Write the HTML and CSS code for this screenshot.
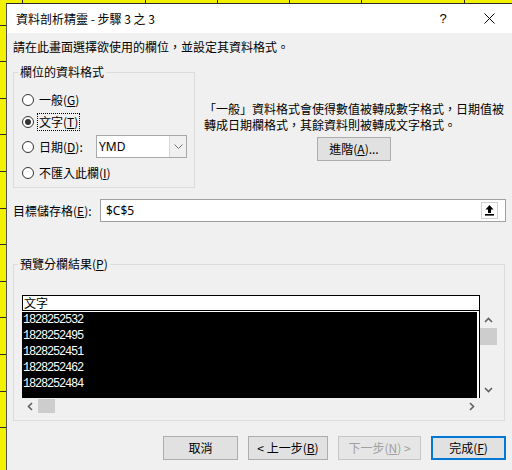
FILE: index.html
```html
<!DOCTYPE html>
<html lang="zh-Hant">
<head>
<meta charset="utf-8">
<title>資料剖析精靈</title>
<link rel="stylesheet" href="styles.css">
</head>
<body>
<div class="screen">
  <div class="top-strip">
    <span class="c1"></span><span class="c2"></span><span class="c3"></span><span class="c4"></span><span class="c5"></span><span class="c6"></span>
  </div>
  <div class="left-strip"></div>
  <div class="dialog">
    <div class="titlebar">
      <div class="title">資料剖析精靈 - 步驟 3 之 3</div>
      <div class="tb-btn help">?</div>
      <div class="tb-btn close">
        <svg width="11" height="11" viewBox="0 0 11 11"><path d="M0.5 0.5 L10.5 10.5 M10.5 0.5 L0.5 10.5" stroke="#000" stroke-width="1" fill="none"/></svg>
      </div>
    </div>
    <div class="content">
      <div class="instr">請在此畫面選擇欲使用的欄位，並設定其資料格式。</div>
      <div class="upper">
        <fieldset class="group fmt">
          <legend>欄位的資料格式</legend>
          <div class="radios">
            <div class="radio-row"><span class="radio"></span><span class="rlabel">一般(<u>G</u>)</span></div>
            <div class="radio-row"><span class="radio checked"><span class="dot"></span></span><span class="rlabel focus">文字(<u>T</u>)</span></div>
            <div class="radio-row"><span class="radio"></span><span class="rlabel">日期(<u>D</u>):</span>
              <div class="combo"><span class="combo-text">YMD</span><span class="combo-btn"><svg width="9" height="5" viewBox="0 0 9 5"><path d="M0.5 0.5 L4.5 4.5 L8.5 0.5" stroke="#707070" stroke-width="1" fill="none"/></svg></span></div>
            </div>
            <div class="radio-row"><span class="radio"></span><span class="rlabel">不匯入此欄(<u>I</u>)</span></div>
          </div>
        </fieldset>
        <div class="desc">
          <div class="desc-line">「一般」資料格式會使得數值被轉成數字格式，日期值被</div>
          <div class="desc-line">轉成日期欄格式，其餘資料則被轉成文字格式。</div>
          <button class="btn btn-adv">進階(<u>A</u>)...</button>
        </div>
      </div>
      <div class="target">
        <span class="tlabel">目標儲存格(<u>E</u>):</span>
        <div class="tinput">
          <span class="tval">$C$5</span>
          <span class="pick"><svg width="15" height="15" viewBox="0 0 15 15"><path d="M7.5 2 L3.5 6.5 L6 6.5 L6 10 L9 10 L9 6.5 L11.5 6.5 Z" fill="#000"/><rect x="3" y="11" width="9" height="1.6" fill="#000"/></svg></span>
        </div>
      </div>
      <fieldset class="group prev">
        <legend>預覽分欄結果(<u>P</u>)</legend>
        <div class="preview">
          <div class="phead">文字</div>
          <div class="pspace"></div>
          <div class="pbody">
            <div class="pdata">
              <div>1828252532</div>
              <div>1828252495</div>
              <div>1828252451</div>
              <div>1828252462</div>
              <div>1828252484</div>
            </div>
          </div>
          <div class="vscroll">
            <span class="arr"><svg width="9" height="6" viewBox="0 0 9 6"><path d="M1 5 L4.5 1.5 L8 5" stroke="#606060" stroke-width="1.6" fill="none"/></svg></span>
            <span class="vthumb"></span>
            <span class="vfill"></span>
            <span class="arr"><svg width="9" height="6" viewBox="0 0 9 6"><path d="M1 1 L4.5 4.5 L8 1" stroke="#606060" stroke-width="1.6" fill="none"/></svg></span>
          </div>
          <div class="hscroll">
            <span class="harr"><svg width="6" height="9" viewBox="0 0 6 9"><path d="M5 1 L1.5 4.5 L5 8" stroke="#606060" stroke-width="1.6" fill="none"/></svg></span>
            <span class="hthumb"></span>
            <span class="hfill"></span>
            <span class="harr"><svg width="6" height="9" viewBox="0 0 6 9"><path d="M1 1 L4.5 4.5 L1 8" stroke="#606060" stroke-width="1.6" fill="none"/></svg></span>
          </div>
          <div class="pspace"></div>
        </div>
      </fieldset>
      <div class="buttons">
        <button class="btn b-cancel">取消</button>
        <button class="btn b-back">&lt; 上一步(<u>B</u>)</button>
        <button class="btn b-next" disabled>下一步(<u>N</u>) &gt;</button>
        <button class="btn b-finish">完成(<u>F</u>)</button>
      </div>
    </div>
  </div>
</div>
</body>
</html>
```
FILE: styles.css
```css
* { box-sizing: border-box; }
html, body { margin: 0; padding: 0; }
body {
  width: 512px;
  height: 470px;
  overflow: hidden;
  background: #f1f100;
  font-family: "Noto Sans CJK TC", "Noto Sans CJK SC", sans-serif;
  font-size: 12px;
  color: #000;
}
u { text-decoration: underline; text-underline-offset: 1px; }

.screen {
  display: grid;
  grid-template-columns: 6px 506px;
  grid-template-rows: 3px 467px;
}
.top-strip { grid-column: 1 / 3; display: flex; height: 3px; }
.top-strip span { flex: none; height: 3px; border-right: 1px solid #2a2a2a; }
.top-strip .c1 { width: 23px; }
.top-strip .c2 { width: 123px; }
.top-strip .c3 { width: 72px; }
.top-strip .c4 { width: 72px; }
.top-strip .c5 { width: 72px; }
.top-strip .c6 { width: 103px; }
.left-strip {
  background-image: repeating-linear-gradient(to bottom, transparent 0, transparent 35.6px, #2a2a2a 35.6px, #2a2a2a 36.6px);
  background-position: 0 -14px;
}

.dialog {
  border-left: 1px solid #555;
  border-top: 1px solid #2a2a2a;
  background: #f0f0f0;
  display: flex;
  flex-direction: column;
}
.titlebar {
  height: 29px;
  background: #fff;
  display: flex;
  align-items: center;
  flex: none;
}
.title { flex: 1; padding-left: 9px; line-height: 16px; }
.tb-btn {
  width: 46px;
  height: 29px;
  display: flex;
  align-items: center;
  justify-content: center;
}
.help { font-family: "Liberation Sans", sans-serif; font-size: 13px; }

.content { padding: 6px 6px 0 6px; }
.instr { line-height: 16px; }

.upper { display: flex; align-items: flex-start; margin-top: 10px; }
.group {
  margin: 0;
  padding: 0;
  border: 1px solid #dcdcdc;
  min-width: 0;
}
.group legend {
  margin-left: 4px;
  padding: 0 2px;
  line-height: 14px;
}
.fmt { width: 182px; flex: none; }
.radios {
  display: grid;
  grid-template-rows: 23px 22px 27px 26px;
  padding: 9px 0 1px 8px;
}
.radio-row { display: flex; align-items: center; }
.radio {
  width: 12px;
  height: 12px;
  flex: none;
  border: 1px solid #333;
  border-radius: 50%;
  background: #fff;
  margin-right: 3px;
  display: flex;
  align-items: center;
  justify-content: center;
}
.dot { width: 6px; height: 6px; border-radius: 50%; background: #333; }
.rlabel { border: 1px dotted transparent; padding: 0 1px; line-height: 16px; }
.rlabel.focus { border-color: #000; }
.combo {
  margin-left: auto;
  margin-right: 7px;
  width: 91px;
  height: 23px;
  border: 1px solid #a8a8a8;
  background: #fff;
  display: flex;
}
.combo-text {
  flex: 1;
  padding-left: 2px;
  line-height: 21px;
  font-family: "Noto Sans", sans-serif;
  font-size: 12px;
}
.combo-btn {
  width: 17px;
  background: #f0f0f0;
  border-left: 1px solid #d6d6d6;
  display: flex;
  align-items: center;
  justify-content: center;
}

.desc {
  margin-left: 9px;
  width: 300px;
  padding-top: 36px;
  display: flex;
  flex-direction: column;
}
.desc-line { white-space: nowrap; line-height: 16px; height: 16px; }
.btn {
  height: 24px;
  border: 1px solid #adadad;
  background: #e1e1e1;
  font-family: inherit;
  font-size: 12px;
  color: #000;
  padding: 0;
  line-height: 20px;
  text-align: center;
}
.btn-adv { width: 74px; align-self: center; margin-top: 4px; }

.target {
  margin-top: 11px;
  display: flex;
  align-items: center;
  height: 23px;
}
.tlabel { line-height: 16px; }
.tinput {
  margin-left: auto;
  width: 406px;
  height: 23px;
  border: 1px solid #a0a0a0;
  background: #fff;
  display: flex;
  align-items: center;
  padding-left: 5px;
}
.tval { flex: 1; font-family: "Noto Sans", sans-serif; font-size: 12px; }
.pick {
  width: 17px;
  height: 17px;
  margin-right: 7px;
  border: 1px solid #d0d0d0;
  display: flex;
  align-items: center;
  justify-content: center;
}

.prev { margin-top: 35px; width: 492px; }
.preview {
  display: grid;
  grid-template-columns: 458px 17px;
  grid-template-rows: 16px 87px 16px;
  padding: 24px 0 6px 8px;
}
.phead {
  border: 1px solid #000;
  background: #fff;
  line-height: 14px;
  padding-left: 1px;
  font-size: 12px;
}
.pbody {
  border-right: 1px solid #000;
  background: #fff;
  padding: 1px 2px 0 0;
}
.pdata {
  background: #000;
  color: #fff;
  height: 100%;
  font-family: "Liberation Mono", monospace;
  font-size: 12px;
  letter-spacing: -1.2px;
  line-height: 16px;
  padding-left: 1px;
}
.vscroll { display: flex; flex-direction: column; }
.arr { height: 17px; display: flex; align-items: center; justify-content: center; flex: none; }
.vthumb { height: 17px; background: #cdcdcd; flex: none; }
.vfill { flex: 1; }
.hscroll { display: flex; }
.harr { width: 16px; display: flex; align-items: center; justify-content: center; flex: none; }
.hthumb { width: 17px; background: #cdcdcd; flex: none; margin: 1px 0; }
.hfill { flex: 1; }

.buttons {
  margin-top: 15px;
  display: flex;
  justify-content: flex-end;
  gap: 10px;
}
.b-cancel { width: 75px; }
.b-back { width: 80px; }
.b-next { width: 83px; background: #e6e6e6; border-color: #c6c6c6; color: #a0a0a0; }
.b-finish { width: 75px; border: 2px solid #0078d7; }
```
